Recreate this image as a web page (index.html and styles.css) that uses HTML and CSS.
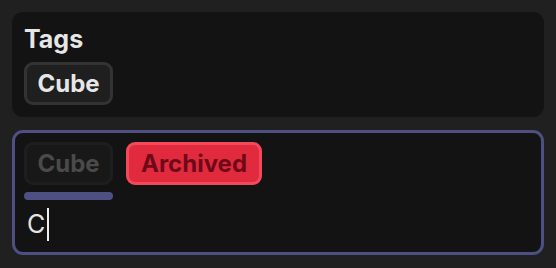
FILE: index.html
```html
<!DOCTYPE html>
<html lang="en">
<head>
  <meta charset="UTF-8" />
  <title>Tags</title>
  <link rel="stylesheet" href="styles.css">
</head>
<body>
  <section class="panel">
    <h2>Tags</h2>
    <div class="tag-list">
      <span class="tag">Cube</span>
    </div>
  </section>

  <section class="editor">
    <div class="tag-list">
      <div class="dragging">
        <span class="tag ghost">Cube</span>
        <div class="drop-bar"></div>
      </div>
      <span class="tag archived">Archived</span>
    </div>
    <div class="tag-input">C<span class="caret"></span></div>
  </section>
</body>
</html>
```

FILE: styles.css
```css
* {
  margin: 0;
  padding: 0;
  box-sizing: border-box;
}

body {
  font-family: Inter, 'Noto Sans', sans-serif;
  background-color: #202020;
  color: #e4e4e4;
  padding: 12px;
}

.panel {
  background: #131313;
  border-radius: 11px;
  padding: 12px;
}

.panel h2 {
  font-size: 25px;
  font-weight: 700;
  line-height: 30px;
  color: #e6e6e6;
  margin-bottom: 8px;
}

.tag-list {
  display: flex;
  align-items: flex-start;
  gap: 13px;
}

.tag {
  display: inline-block;
  width: 89px;
  height: 43px;
  padding: 4px 0;
  text-align: center;
  font-size: 24px;
  font-weight: 700;
  line-height: 29px;
  color: #e6e6e6;
  background: #1f1f1f;
  border: 3px solid #333;
  border-radius: 9px;
}

.editor {
  margin-top: 13px;
  background: #131313;
  border: 3px solid #4e4f82;
  border-radius: 11px;
  padding: 9px 9px 11px;
}

.dragging {
  display: flex;
  flex-direction: column;
  gap: 7px;
}

.tag.ghost {
  color: #4a4a4a;
  background: #181818;
  border-color: #1e1e1e;
}

.drop-bar {
  height: 8px;
  border-radius: 4px;
  background: #4e4f82;
}

.tag.archived {
  width: 136px;
  color: #6e0a18;
  background: #e22a3e;
  border-color: #f4485b;
}

.tag-input {
  margin-top: 8px;
  padding-left: 3px;
  font-size: 25px;
  line-height: 33px;
  height: 33px;
  color: #e4e4e4;
  display: flex;
  align-items: stretch;
}

.caret {
  width: 2px;
  margin-left: 2px;
  background: #f0f0f0;
}
```
